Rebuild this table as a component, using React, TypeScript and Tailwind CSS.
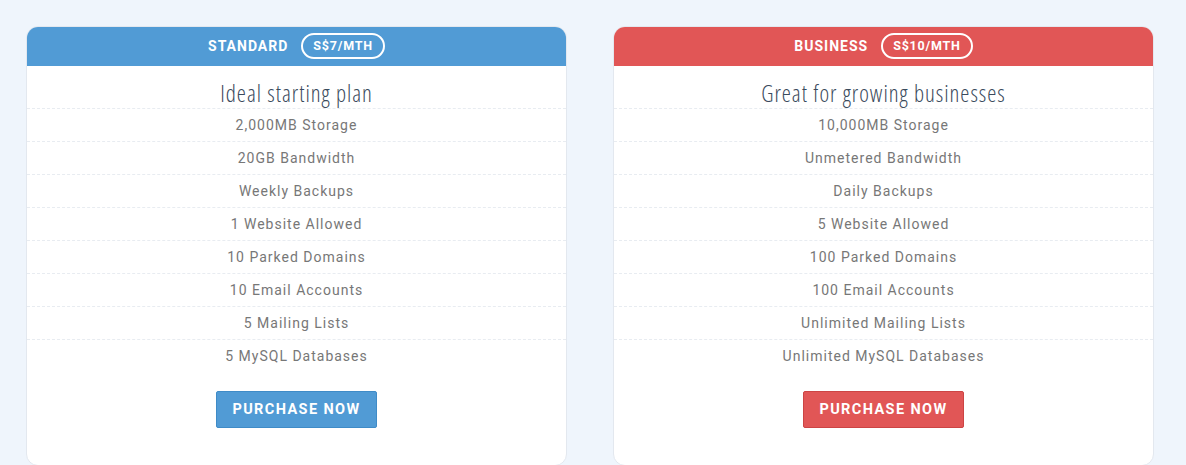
import React from "react";

const plans = [
  {
    name: "STANDARD",
    price: "S$7/MTH",
    tagline: "Ideal starting plan",
    head: "bg-[#519bd5]",
    btn: "bg-[#519bd5] border-[#3f8bc7]",
    features: [
      "2,000MB Storage",
      "20GB Bandwidth",
      "Weekly Backups",
      "1 Website Allowed",
      "10 Parked Domains",
      "10 Email Accounts",
      "5 Mailing Lists",
      "5 MySQL Databases",
    ],
  },
  {
    name: "BUSINESS",
    price: "S$10/MTH",
    tagline: "Great for growing businesses",
    head: "bg-[#e15656]",
    btn: "bg-[#e15656] border-[#cc4444]",
    features: [
      "10,000MB Storage",
      "Unmetered Bandwidth",
      "Daily Backups",
      "5 Website Allowed",
      "100 Parked Domains",
      "100 Email Accounts",
      "Unlimited Mailing Lists",
      "Unlimited MySQL Databases",
    ],
  },
];

export default function App() {
  return (
    <div className="h-[465px] bg-[#eff5fc] pt-[26px] pl-[26px] flex gap-[46px] font-['Roboto',sans-serif] overflow-hidden">
      {plans.map((p) => (
        <div
          key={p.name}
          className="w-[541px] h-[440px] shrink-0 bg-white border border-[#e3e8ef] rounded-[12px] overflow-hidden"
        >
          {/* header */}
          <div className={`${p.head} h-[40px] -mx-px -mt-px flex items-center justify-center gap-[13px]`}>
            <span className="text-white font-bold text-[14px] tracking-[1px]">{p.name}</span>
            <span className="text-white font-bold text-[12.5px] tracking-[0.8px] border-2 border-white rounded-full h-[26px] px-[10px] flex items-center">
              {p.price}
            </span>
          </div>

          <div className="h-[42px] flex items-end justify-center text-[23px] leading-[30px] text-[#3a4a5c] font-['Open_Sans',sans-serif] font-light [font-stretch:87.5%] tracking-[1px]">
            {p.tagline}
          </div>

          {p.features.map((f) => (
            <div
              key={f}
              className="h-[33px] border-t border-dashed border-[#e8ecf1] flex items-center justify-center text-[14px] text-[#777] tracking-[1px]"
            >
              {f}
            </div>
          ))}

          <div className="flex justify-center mt-[19px]">
            <button
              className={`${p.btn} border w-[161px] h-[37px] rounded-[2px] text-white font-bold text-[14.5px] tracking-[1.4px]`}
            >
              PURCHASE NOW
            </button>
          </div>
        </div>
      ))}
    </div>
  );
}
